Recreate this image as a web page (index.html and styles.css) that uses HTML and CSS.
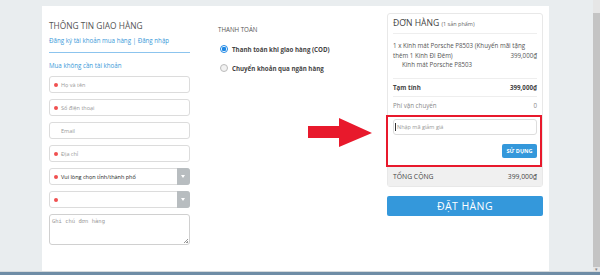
FILE: index.html
```html
<!DOCTYPE html>
<html lang="vi">
<head>
    <meta charset="UTF-8">
    <meta name="viewport" content="width=device-width, initial-scale=1.0">
    <title>Thanh toán</title>
    <link rel="stylesheet" href="styles.css">
</head>
<body>
    <div class="checkout">
        <!-- Shipping info -->
        <div class="col-info">
            <h2 class="section-title">THÔNG TIN GIAO HÀNG</h2>
            <div class="account-links">Đăng ký tài khoản mua hàng | Đăng nhập</div>
            <div class="guest">Mua không cần tài khoản</div>

            <div class="field"><span class="dot"></span><span class="ph">Họ và tên</span></div>
            <div class="field"><span class="dot"></span><span class="ph">Số điện thoại</span></div>
            <div class="field"><span class="nodot"></span><span class="ph">Email</span></div>
            <div class="field"><span class="dot"></span><span class="ph">Địa chỉ</span></div>
            <div class="field select"><span class="dot"></span><span class="val">Vui lòng chọn tỉnh/thành phố</span><span class="arrow"></span></div>
            <div class="field select"><span class="dot"></span><span class="val"></span><span class="arrow"></span></div>
            <div class="note">Ghi chú đơn hàng<span class="grip"></span></div>
        </div>

        <!-- Payment -->
        <div class="col-pay">
            <div class="pay-title">THANH TOÁN</div>
            <label class="radio"><span class="circle checked"></span>Thanh toán khi giao hàng (COD)</label>
            <label class="radio"><span class="circle"></span>Chuyển khoản qua ngân hàng</label>
        </div>

        <!-- Order summary -->
        <div class="col-order">
            <div class="order-box">
                <div class="order-head">ĐƠN HÀNG <small>(1 sản phẩm)</small></div>
                <div class="order-item">
                    <div class="item-name">1 x Kính mát Porsche P8503 (Khuyến mãi tặng</div>
                    <div class="row"><span>thêm 1 Kính Đi Đêm)</span><span>399,000₫</span></div>
                    <div class="item-sub">Kính mát Porsche P8503</div>
                </div>
                <div class="row line bold"><span>Tạm tính</span><span>399,000₫</span></div>
                <div class="row line light"><span>Phí vận chuyển</span><span>0</span></div>
                <div class="coupon">
                    <div class="coupon-input"><span class="caret"></span>Nhập mã giảm giá</div>
                    <button class="coupon-btn">SỬ DỤNG</button>
                </div>
                <div class="row total"><span>TỔNG CỘNG</span><span>399,000₫</span></div>
            </div>
            <button class="order-btn">ĐẶT HÀNG</button>
        </div>
    </div>

    <svg class="pointer" width="66" height="32" viewBox="0 0 66 32">
        <polygon points="0,8 31,8 31,0 64,15 31,29 31,20 0,20" fill="#e8192c"/>
    </svg>

    <div class="scrollbar"><div class="thumb"></div><div class="down">&#9662;</div></div>
    <div class="taskbar"></div>
</body>
</html>
```

FILE: styles.css
```css
body {
    margin: 0;
    width: 600px;
    height: 275px;
    overflow: hidden;
    background-color: #e9edef;
    font-family: "Open Sans", Arial, sans-serif;
    color: #555;
    position: relative;
}

.checkout {
    margin: 6px 0 0 42px;
    width: 507px;
    height: 265px;
    box-sizing: border-box;
    background-color: #fff;
    padding: 0 6px 0 7px;
    display: grid;
    grid-template-columns: 141px 28px 169px 156px;
}

/* Shipping info */
.col-info {
    grid-column: 1;
    padding-top: 14px;
}

.col-pay {
    grid-column: 3;
    padding-top: 19px;
}

.col-order {
    grid-column: 4;
    padding-top: 7px;
}

.section-title {
    margin: 0;
    font-size: 8.4px;
    font-weight: 400;
    line-height: 12px;
    color: #555;
}

.account-links {
    font-size: 6.2px;
    line-height: 10px;
    margin-top: 4px;
    color: #3a9ad9;
    padding-bottom: 6px;
    border-bottom: 1px solid #8cc4ee;
}

.guest {
    font-size: 6.2px;
    line-height: 10px;
    margin-top: 8px;
    color: #3a9ad9;
    margin-bottom: 5px;
}

.field {
    height: 17px;
    box-sizing: border-box;
    border: 1px solid #dcdcdc;
    border-radius: 3px;
    margin-bottom: 6px;
    display: flex;
    align-items: center;
    padding-left: 4px;
    font-size: 5.5px;
    color: #999;
}

.dot, .nodot {
    width: 4px;
    height: 4px;
    border-radius: 50%;
    background-color: #f05050;
    margin-right: 3px;
    flex-shrink: 0;
}

.nodot {
    background: none;
}

.ph {
    flex: 1;
}

.select .val {
    flex: 1;
    color: #222;
}

.select .arrow {
    width: 13px;
    height: 17px;
    margin: -1px -1px -1px 0;
    background-color: #b8bdc0;
    border-radius: 0 3px 3px 0;
    position: relative;
}

.select .arrow::after {
    content: "";
    position: absolute;
    left: 4px;
    top: 7px;
    border-left: 2.5px solid transparent;
    border-right: 2.5px solid transparent;
    border-top: 3px solid #fff;
}

.note {
    height: 31px;
    box-sizing: border-box;
    border: 1px solid #d0d0d0;
    border-radius: 3px;
    padding: 3px 2px;
    font-family: "DejaVu Sans Mono", monospace;
    font-size: 5.5px;
    color: #999;
    position: relative;
}

.grip {
    position: absolute;
    right: 1px;
    bottom: 1px;
    width: 4px;
    height: 4px;
    background: linear-gradient(135deg, transparent 45%, #999 45%, #999 55%, transparent 55%, transparent 75%, #999 75%);
}

/* Payment */
.pay-title {
    font-size: 6.2px;
    line-height: 10px;
    color: #555;
    margin-bottom: 8px;
}

.radio {
    display: flex;
    align-items: center;
    font-size: 6.2px;
    font-weight: 700;
    color: #444;
    height: 12px;
    margin-bottom: 7px;
}

.circle {
    width: 8px;
    height: 8px;
    box-sizing: border-box;
    border-radius: 50%;
    border: 1px solid #bbb;
    margin: 0 4px 0 2px;
    background-color: #f2f2f2;
}

.circle.checked {
    border: 1px solid #1e88e5;
    background: radial-gradient(circle, #1e88e5 0 2px, #fff 2.5px);
}

/* Order */
.order-box {
    border: 1px solid #e8e8e8;
    border-radius: 3px;
    padding: 0 5px;
    font-size: 6.2px;
    color: #555;
}

.order-head {
    font-size: 8.6px;
    line-height: 12px;
    padding: 3px 0 3px;
    color: #444;
    border-bottom: 1px solid #eee;
}

.order-head small {
    font-size: 5.5px;
    color: #666;
}

.order-item {
    padding: 7px 0 8px;
    line-height: 9.5px;
    border-bottom: 1px solid #eee;
}

.item-sub {
    padding-left: 9px;
}

.row {
    display: flex;
    justify-content: space-between;
}

.row.line {
    line-height: 17px;
    border-bottom: 1px solid #eee;
}

.row.bold {
    font-weight: 700;
    color: #444;
}

.row.light {
    color: #888;
    border-bottom: none;
}

.coupon {
    margin: 1px -5px 0 -7px;
    border: 2px solid #e8192c;
    height: 52px;
    box-sizing: border-box;
    background-color: #fff;
    padding: 2px 3px 0 5px;
    display: flex;
    flex-direction: column;
    align-items: flex-end;
}

.coupon-input {
    align-self: stretch;
    height: 16px;
    box-sizing: border-box;
    border: 1px solid #ddd;
    border-radius: 3px;
    font-size: 5.5px;
    color: #999;
    display: flex;
    align-items: center;
    padding-left: 1px;
}

.caret {
    width: 1px;
    height: 8px;
    background-color: #333;
    margin-right: 1px;
}

.coupon-btn {
    margin-top: 9px;
    width: 35px;
    height: 14px;
    border: none;
    border-radius: 2px;
    background-color: #3498db;
    color: #fff;
    font-family: "Open Sans", Arial, sans-serif;
    font-size: 5.5px;
    font-weight: 700;
    padding: 0;
}

.row.total {
    margin: 0 -5px;
    padding: 0 5px;
    height: 19px;
    align-items: center;
    background-color: #f0f0f0;
    font-size: 6.8px;
    color: #444;
}

.order-btn {
    display: block;
    width: 100%;
    margin-top: 9px;
    height: 20px;
    border: none;
    border-radius: 2px;
    background-color: #3498db;
    color: #fff;
    font-family: "Open Sans", Arial, sans-serif;
    font-size: 10.5px;
    letter-spacing: 0.4px;
    padding: 0;
}

/* Screenshot overlays */
.pointer {
    position: absolute;
    left: 308px;
    top: 118px;
}

.scrollbar {
    position: absolute;
    right: 0;
    top: 0;
    width: 7px;
    height: 272px;
    background-color: #e6e6e6;
}

.thumb {
    margin-top: 13px;
    height: 254px;
    background-color: #c4c4c4;
}

.down {
    font-size: 5px;
    color: #888;
    text-align: center;
    line-height: 5px;
}

.taskbar {
    position: absolute;
    left: 0;
    bottom: 0;
    width: 600px;
    height: 4px;
    border-top: 1px solid #d6dadc;
    box-sizing: border-box;
    background-color: #6f8da6;
}
```
